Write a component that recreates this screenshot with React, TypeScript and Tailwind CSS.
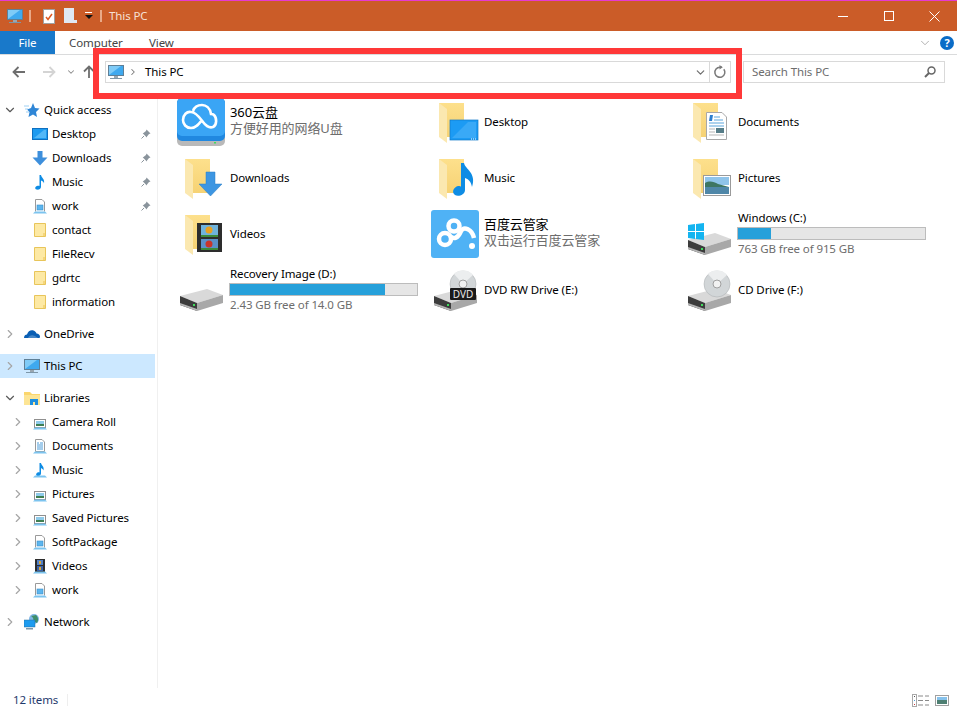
import React from 'react'
import { ChevronDown, ChevronRight } from 'lucide-react'

const Pc = () => (
  <svg width="16" height="16" viewBox="0 0 16 16" className="shrink-0">
    <rect x="0.5" y="1.5" width="15" height="10" fill="#3fa9ef" stroke="#5f7f96" />
    <path d="M1 11 L1 2 L13 2 Z" fill="#7fcbf7" />
    <rect x="6" y="12" width="4" height="2" fill="#9aa7b0" />
    <rect x="2" y="14" width="12" height="1" fill="#7d97a9" />
  </svg>
)

const Star = () => (
  <svg width="16" height="16" viewBox="0 0 16 16" className="shrink-0">
    <path d="M9 1 L11 6 L15.5 6.500 L12 10 L13 15 L9 12.500 L4.500 15 L5.500 10 L3 7.500 L7 6 Z" fill="#2f86d6" />
    <path d="M0 4 H5 M1 7 H4 M2 10 H5" stroke="#9fd0f3" />
  </svg>
)

const BlueScreen = () => (
  <svg width="16" height="16" viewBox="0 0 16 16" className="shrink-0">
    <rect x="0.500" y="2.500" width="15" height="11" fill="#1e9bf0" stroke="#0f70c0" />
    <path d="M2 12 L12 4 H14 V12 Z" fill="#54b8f7" />
  </svg>
)

const DownArrow = () => (
  <svg width="16" height="16" viewBox="0 0 16 16" className="shrink-0">
    <path d="M5.500 1 H10.500 V7.500 H15.500 L8 15.500 L0.500 7.500 H5.500 Z" fill="#3d8fdc" />
  </svg>
)

const Note = () => (
  <svg width="16" height="16" viewBox="0 0 16 16" className="shrink-0">
    <path d="M7.500 1 H9 C9.500 4 13 5 12 9.500 C11.500 7.500 10.500 7 9 6.500 V13 C9 15 6.500 16 4.500 15.500 C2.500 15 3 12.500 5 12 C6 11.700 7 11.800 7.500 12 Z" fill="#0e8ce4" />
  </svg>
)

const Lib = ({ children }: { children?: React.ReactNode }) => (
  <svg width="16" height="16" viewBox="0 0 16 16" className="shrink-0">
    {children}
    <path d="M1 15.500 L3 13.500 H13 L15 15.500 Z" fill="#7cc4ef" />
  </svg>
)

const DocLib = () => (
  <Lib>
    <path d="M3.500 13.500 V1.500 H10 L12.500 4 V13.500" fill="#fff" stroke="#9a9a9a" />
    <rect x="5" y="7" width="6" height="5" fill="#5cb5ee" stroke="#3b8fc9" strokeWidth="0.600" />
  </Lib>
)

const PicLib = () => (
  <Lib>
    <rect x="2.500" y="5.500" width="11" height="8" fill="#fff" stroke="#8f8f8f" />
    <rect x="4" y="7" width="8" height="3" fill="#8fcbea" />
    <rect x="4" y="10" width="8" height="2" fill="#3f7f52" />
  </Lib>
)

const TextLib = () => (
  <Lib>
    <path d="M3.500 13.500 V1.500 H10 L12.500 4 V13.500 Z" fill="#fff" stroke="#9a9a9a" />
    <path d="M5 5 H7 M8 5 H11 M5 7 H11 M5 9 H11 M5 11 H11" stroke="#4a9bd8" />
  </Lib>
)

const MusicLib = () => (
  <Lib>
    <path d="M7.500 1 H9 C9.500 3.500 12.500 4.500 11.500 8.500 C11 7 10 6.500 9 6 V11.500 C9 13.500 6.500 14.500 5 14 C3.500 13.500 4 11 5.500 10.500 C6.300 10.300 7 10.300 7.500 10.500 Z" fill="#0e8ce4" />
  </Lib>
)

const FilmLib = () => (
  <Lib>
    <rect x="3" y="1" width="10" height="13" fill="#2d2d2d" />
    <rect x="5" y="2" width="6" height="5" fill="#4f7fc9" />
    <rect x="5" y="8" width="6" height="5" fill="#3c62a8" />
    <path d="M7 3 H9 V6 H7 Z M7 9 H9 V12 H7 Z" fill="#d9a63a" />
  </Lib>
)

const SmallFolder = () => (
  <svg width="16" height="16" viewBox="0 0 16 16" className="shrink-0">
    <path d="M2.500 1.500 H13.500 V14.500 H2.500 Z" fill="#fde9a4" stroke="#e8c55a" />
    <path d="M11 14 V11 H13 V14 Z" fill="#f5d67b" />
  </svg>
)

const Cloud = () => (
  <svg width="16" height="16" viewBox="0 0 16 16" className="shrink-0">
    <path d="M0 12 C0 9.500 1.500 8.500 3 8.500 C4 5 7 3.500 9.500 4.500 C11 5 12 6 12.500 7.500 C14.500 7.500 16 9 16 10.500 C16 11.500 15.500 12 15 12 Z" fill="#0a5fb4" />
    <path d="M4 12 C5 9.500 8 8.500 11 10 L14 12 Z" fill="#fff" opacity="0.250" />
  </svg>
)

const LibFolder = () => (
  <svg width="16" height="16" viewBox="0 0 16 16" className="shrink-0">
    <path d="M0 2 H6 L8 4 H16 V15 H0 Z" fill="#fbd66d" />
    <path d="M0 5 H16 V15 H0 Z" fill="#fde595" />
    <rect x="6" y="9" width="8" height="6" fill="#1d8fe0" />
    <rect x="9" y="12" width="2" height="3" fill="#fde595" />
  </svg>
)

const Net = () => (
  <svg width="16" height="16" viewBox="0 0 16 16" className="shrink-0">
    <circle cx="10" cy="5" r="5" fill="#7fb6e6" />
    <path d="M7 2 C9 3 10 5 9 7 L13 9 C15 6 14 3 12 1 Z" fill="#3f8f6a" />
    <rect x="0" y="6" width="11" height="7" fill="#1d9bef" stroke="#2a6f9f" strokeWidth="0.500" />
    <rect x="2" y="14" width="7" height="1.500" fill="#7d97a9" />
  </svg>
)

const Pin = () => (
  <svg width="10" height="10" viewBox="0 0 10 10" className="shrink-0">
    <path d="M5.500 0.500 L9.500 4.500 L8 5 L6 7.500 L5.800 8.500 L1.700 4.300 L2.500 4 L5 2 Z" fill="#8a949c" />
    <path d="M3 7 L0.500 9.500" stroke="#8a949c" />
  </svg>
)

// big folder shared by the six library tiles, overlay goes on top
const BigFolder = ({ children }: { children?: React.ReactNode }) => (
  <svg width="48" height="48" viewBox="0 0 48 48" className="shrink-0">
    <defs>
      <linearGradient id="folderBack" x1="0" y1="0" x2="0" y2="1">
        <stop offset="0" stopColor="#fde08c" />
        <stop offset="1" stopColor="#f6d274" />
      </linearGradient>
    </defs>
    <path d="M8 5 H33 V39 H8 Z" fill="url(#folderBack)" />
    <path d="M8 5 L16 11 V45 L8 39 Z" fill="#fbe8b0" />
    {children}
  </svg>
)

const Big = ({ children }: { children: React.ReactNode }) => (
  <svg width="48" height="48" viewBox="0 0 48 48" className="shrink-0">{children}</svg>
)

const DriveBody = () => (
  <>
    <path d="M3 30 L30 23 L46 29 L20 37 Z" fill="#d9d9d9" />
    <path d="M3 30 L20 37 V45 L3 39 Z" fill="#3c3c3c" />
    <path d="M3 37 L20 43 V45 L3 39 Z" fill="#b5b5b5" />
    <path d="M20 37 L46 29 V37 L20 45 Z" fill="#a8a8a8" />
    <rect x="16" y="38" width="2" height="2" fill="#3fdc5c" />
  </>
)

const Disc = () => (
  <>
    <circle cx="32" cy="18" r="13" fill="#d2d6d8" stroke="#a8acae" strokeWidth="0.500" />
    <path d="M32 18 L23 8 A13 13 0 0 1 42 9 Z" fill="#eceeef" />
    <circle cx="32" cy="18" r="4" fill="#f2f2f2" stroke="#a0a0a0" />
  </>
)

const Item = ({ icon, children }: { icon: React.ReactNode; children: React.ReactNode }) => (
  <div className="flex h-14 items-center pl-px">
    {icon}
    <div className="ml-[5px] min-w-0 flex-1 text-black">{children}</div>
  </div>
)

const Tile = ({ icon, name, sub }: { icon: React.ReactNode; name: string; sub: string }) => (
  <Item icon={icon}>
    <div className="-mt-[4px] text-[13px] leading-[16px]">{name}</div>
    <div className="text-[13px] leading-[16px] text-[#6d6d6d]">{sub}</div>
  </Item>
)

const Drive = ({ icon, name, free, used }: { icon: React.ReactNode; name: string; free: string; used: string }) => (
  <Item icon={icon}>
    <div className="-mt-px leading-[16px]">{name}</div>
    <div className="-ml-px mt-px h-[13px] w-[189px] border border-[#bcbcbc] bg-[#e6e6e6]">
      <div className={used + ' h-full bg-[#26a0da]'} />
    </div>
    <div className="mt-px leading-[16px] text-[#6d6d6d]">{free}</div>
  </Item>
)

const Row = ({ level = 1, arrow, icon, label, pin, active }: {
  level?: 1 | 2
  arrow?: 'open' | 'closed'
  icon: React.ReactNode
  label: string
  pin?: boolean
  active?: boolean
}) => (
  <div className={'flex h-6 items-center ' + (active ? 'bg-[#cce8ff] ' : '') + (level === 1 ? 'pl-[3px]' : 'pl-[11px]')}>
    <span className="flex w-[14px] justify-center">
      {arrow === 'open' && <ChevronDown size={14} strokeWidth={2} className="text-[#5a5a5a]" />}
      {arrow === 'closed' && <ChevronRight size={14} strokeWidth={2} className="text-[#a6a6a6]" />}
    </span>
    <span className="ml-[7px]">{icon}</span>
    <span className="ml-1 flex-1 text-black">{label}</span>
    {pin && <span className="mr-[4px]"><Pin /></span>}
  </div>
)

export default function App() {
  return (
    <div className="relative flex h-[710px] w-[957px] flex-col overflow-hidden bg-white text-[11.5px] leading-4 tracking-[-0.1px]" style={{ fontFamily: '"Noto Sans", "Noto Sans CJK SC", sans-serif' }}>
      {/* title bar */}
      <div className="flex h-[31px] items-center border-t border-[#e63ad0] bg-[#cb5c28]">
        <div className="ml-[7px]"><Pc /></div>
        <div className="ml-[6px] h-3 w-[2px] border-x border-[#e9a988]" />
        <svg width="14" height="16" viewBox="0 0 14 16" className="ml-[11px]">
          <rect x="1.500" y="1.500" width="11" height="14" fill="#fff" stroke="#a0a0a0" />
          <path d="M4 9 L6 11.500 L10 6" fill="none" stroke="#dd5a22" strokeWidth="1.500" />
        </svg>
        <svg width="14" height="16" viewBox="0 0 14 16" className="ml-[8px]">
          <path d="M0 0 H10 V12 L13 12 V15 H0 Z" fill="#dfe8f3" />
        </svg>
        <svg width="10" height="10" viewBox="0 0 10 10" className="ml-[6px]">
          <rect x="1" y="1" width="7" height="1" fill="#fff" />
          <path d="M1 4 H9 L5 8 Z" fill="#111" />
        </svg>
        <div className="ml-[6px] h-3 w-[2px] border-x border-[#e9a988]" />
        <span className="ml-[7px] text-[#f6e0d5]">This PC</span>
        <div className="ml-auto flex h-full">
          <div className="flex w-[46px] items-center justify-center"><div className="h-px w-[10px] bg-white" /></div>
          <div className="flex w-[45px] items-center justify-center"><div className="h-[10px] w-[10px] border border-white" /></div>
          <div className="flex w-[46px] items-center justify-center">
            <svg width="11" height="11" viewBox="0 0 11 11"><path d="M0.500 0.500 L10.500 10.500 M10.500 0.500 L0.500 10.500" stroke="#fff" /></svg>
          </div>
        </div>
      </div>

      {/* ribbon tabs */}
      <div className="flex h-6 items-stretch border-b border-[#dadbdc]">
        <div className="flex w-[55px] items-center justify-center bg-[#1979ca] text-white">File</div>
        <div className="ml-[14px] flex w-[52px] items-center text-[#444]">Computer</div>
        <div className="ml-7 flex items-center text-[#444]">View</div>
        <div className="ml-auto flex items-center">
          <ChevronDown size={14} strokeWidth={1.300} className="mr-[8px] text-[#9a9a9a]" />
          <div className="mr-[3px] flex h-[14px] w-[14px] items-center justify-center rounded-full bg-[#0a6cc7] text-[11px] font-bold text-white">?</div>
        </div>
      </div>

      {/* nav row */}
      <div className="flex h-[39px] pt-[6px]">
        <div className="flex h-[22px] w-[105px] items-center">
          <svg width="14" height="12" viewBox="0 0 14 12" className="ml-3"><path d="M13 6 H2 M6.500 1 L1.500 6 L6.500 11" fill="none" stroke="#6e6e6e" strokeWidth="1.800" /></svg>
          <svg width="14" height="12" viewBox="0 0 14 12" className="ml-4"><path d="M1 6 H12 M7.500 1 L12.500 6 L7.500 11" fill="none" stroke="#d4d4d4" strokeWidth="1.800" /></svg>
          <ChevronDown size={10} strokeWidth={2.500} className="ml-[10px] text-[#8c8c8c]" />
          <svg width="12" height="14" viewBox="0 0 12 14" className="ml-[7px]"><path d="M6 13 V2 M1 6.500 L6 1.500 L11 6.500" fill="none" stroke="#6e6e6e" strokeWidth="1.800" /></svg>
        </div>
        <div className="flex h-[22px] w-[626px] items-center border border-[#d9d9d9] pl-[2px]">
          <Pc />
          <ChevronRight size={10} strokeWidth={2.500} className="ml-[4px] text-[#7a7a7a]" />
          <span className="ml-[7px] text-black">This PC</span>
          <ChevronDown size={13} strokeWidth={2.200} className="ml-auto mr-[2px] text-[#6d6d6d]" />
          <div className="h-full w-px bg-[#d9d9d9]" />
          <svg width="20" height="14" viewBox="0 0 14 14" className="mr-0">
            <path d="M10.800 4.200 A5 5 0 1 1 7 2.300 H9" fill="none" stroke="#7a7a7a" strokeWidth="1.500" />
            <path d="M6.500 0 L9.800 2.300 L6.500 4.600 Z" fill="#7a7a7a" />
          </svg>
        </div>
        <div className="ml-3 flex h-[22px] w-[202px] items-center justify-between border border-[#d9d9d9] pl-2 pr-2 text-[#6d6d6d]">
          <span>Search This PC</span>
          <svg width="12" height="12" viewBox="0 0 12 12"><circle cx="7.500" cy="4.500" r="3.500" fill="none" stroke="#666" strokeWidth="1.500" /><path d="M5 7 L1 11" stroke="#666" strokeWidth="2" /></svg>
        </div>
      </div>

      <div className="flex min-h-0 flex-1">
        {/* nav pane */}
        <div className="w-[155px] shrink-0 pt-1">
          <Row arrow="open" icon={<Star />} label="Quick access" />
          <Row level={2} icon={<BlueScreen />} label="Desktop" pin />
          <Row level={2} icon={<DownArrow />} label="Downloads" pin />
          <Row level={2} icon={<Note />} label="Music" pin />
          <Row level={2} icon={<DocLib />} label="work" pin />
          <Row level={2} icon={<SmallFolder />} label="contact" />
          <Row level={2} icon={<SmallFolder />} label="FileRecv" />
          <Row level={2} icon={<SmallFolder />} label="gdrtc" />
          <Row level={2} icon={<SmallFolder />} label="information" />
          <div className="mt-2"><Row arrow="closed" icon={<Cloud />} label="OneDrive" /></div>
          <div className="mt-2"><Row arrow="closed" icon={<Pc />} label="This PC" active /></div>
          <div className="mt-2"><Row arrow="open" icon={<LibFolder />} label="Libraries" /></div>
          <Row level={2} arrow="closed" icon={<PicLib />} label="Camera Roll" />
          <Row level={2} arrow="closed" icon={<TextLib />} label="Documents" />
          <Row level={2} arrow="closed" icon={<MusicLib />} label="Music" />
          <Row level={2} arrow="closed" icon={<PicLib />} label="Pictures" />
          <Row level={2} arrow="closed" icon={<PicLib />} label="Saved Pictures" />
          <Row level={2} arrow="closed" icon={<DocLib />} label="SoftPackage" />
          <Row level={2} arrow="closed" icon={<FilmLib />} label="Videos" />
          <Row level={2} arrow="closed" icon={<DocLib />} label="work" />
          <div className="mt-2"><Row arrow="closed" icon={<Net />} label="Network" /></div>
        </div>
        <div className="ml-[2px] h-[594px] w-px bg-[#f0f0f0]" />

        {/* content */}
        <div className="grid flex-1 auto-rows-[56px] grid-cols-[254px_254px_254px] content-start pl-[18px]">
          <Tile
            name="360云盘"
            sub="方便好用的网络U盘"
            icon={
              <Big>
                <rect x="0" y="0" width="48" height="48" rx="5" fill="#b9b9b9" />
                <rect x="0" y="0" width="48" height="43" rx="5" fill="#2088e0" />
                <rect x="0" y="0" width="48" height="38" rx="5" fill="#3aa5f5" />
                <path d="M14 30 C9 30 6 26 6 22 C6 17 10 13 14 14 C19 14 23 20 26 24 C29 28 33 30 36 29 C40 27 40 20 37 17 C36 16 35 16 34 16 C33 10 29 7 25 7 C20 7 17 10 16 13 M14 30 C19 30 22 26 25 22" fill="none" stroke="#fff" strokeWidth="2.600" />
                <rect x="37" y="44" width="2" height="1.500" fill="#3fdc5c" />
              </Big>
            }
          />
          <Item
            icon={
              <BigFolder>
                <rect x="19" y="22" width="28" height="20" fill="#1c9bf4" stroke="#0f78c8" strokeWidth="0.700" />
                <path d="M21 40 L37 24 H45 V40 Z" fill="#4db3f8" opacity="0.600" />
                <path d="M40 41 H46" stroke="#fff" strokeDasharray="1 1" />
              </BigFolder>
            }
          >
            <div className="-mt-px leading-4">Desktop</div>
          </Item>
          <Item
            icon={
              <BigFolder>
                <path d="M21.500 14.500 H37 L41.500 19 V41.500 H21.500 Z" fill="#fff" stroke="#a8a8a8" />
                <path d="M25 17 H28 L27 23 H24 Z" fill="#2d7fd0" />
                <path d="M29 19 H35 M29 22 H38 M24 25 H39 M24 28 H39" stroke="#5aa5dc" />
                <rect x="31" y="30" width="8" height="5" fill="#567d88" />
                <path d="M24 31 H30 M24 34 H30 M24 37 H39" stroke="#b5b5b5" />
              </BigFolder>
            }
          >
            <div className="-mt-px leading-4">Documents</div>
          </Item>

          <Item
            icon={
              <BigFolder>
                <path d="M29 18 H38 V30 H45 L33.500 42 L22 30 H29 Z" fill="#3d96e2" stroke="#2a7cc4" strokeWidth="0.500" />
              </BigFolder>
            }
          >
            <div className="-mt-px leading-4">Downloads</div>
          </Item>
          <Item
            icon={
              <BigFolder>
                <path d="M30 9 H33 C34 15 46 19 41 33 C40 27 37 25 34 24 V36 C34 41 27 43 24 41 C20 38 23 33 27 32 C29 32 30 32 30 33 Z" fill="#0e8ce4" />
              </BigFolder>
            }
          >
            <div className="-mt-px leading-4">Music</div>
          </Item>
          <Item
            icon={
              <BigFolder>
                <rect x="18.500" y="21.500" width="27" height="20" fill="#fff" stroke="#9a9a9a" />
                <rect x="20" y="23" width="24" height="8" fill="#8fc4ea" />
                <path d="M20 33 V29 C25 26 29 28 33 30 L44 33 Z" fill="#3e7662" />
                <rect x="20" y="33" width="24" height="7" fill="#4f87a8" />
              </BigFolder>
            }
          >
            <div className="-mt-px leading-4">Pictures</div>
          </Item>

          <Item
            icon={
              <BigFolder>
                <rect x="20" y="13" width="25" height="29" fill="#2d2d2d" />
                <rect x="24" y="15" width="17" height="12" fill="#6fb3dc" />
                <rect x="24" y="29" width="17" height="11" fill="#5a8fc9" />
                <circle cx="32" cy="20" r="3.500" fill="#e8a020" />
                <circle cx="32" cy="34" r="3.500" fill="#c9342a" />
                <path d="M24 27 H41 V25 H24 Z M24 40 H41 V38 H24 Z" fill="#3c8a3c" />
              </BigFolder>
            }
          >
            <div className="-mt-px leading-4">Videos</div>
          </Item>
          <Tile
            name="百度云管家"
            sub="双击运行百度云管家"
            icon={
              <Big>
                <rect x="0" y="0" width="48" height="48" rx="3" fill="#4fb2f5" />
                <circle cx="23" cy="16" r="5.500" fill="none" stroke="#fff" strokeWidth="4.500" />
                <circle cx="14" cy="29" r="6" fill="none" stroke="#fff" strokeWidth="4.500" />
                <path d="M19 26 C23 30 27 28 30 21 C33 16 41 19 43 28" fill="none" stroke="#fff" strokeWidth="4.500" />
                <circle cx="41" cy="36" r="3" fill="#fff" />
              </Big>
            }
          />
          <Drive
            name="Windows (C:)"
            free="763 GB free of 915 GB"
            used="w-[33px]"
            icon={
              <Big>
                <DriveBody />
                <path d="M3 15 L10 14 V21 H3 Z M11 14 L19 13 V21 H11 Z M3 22 H10 V29 L3 28 Z M11 22 H19 V30 L11 29 Z" fill="#14b4f0" />
              </Big>
            }
          />

          <Drive
            name="Recovery Image (D:)"
            free="2.43 GB free of 14.0 GB"
            used="w-[155px]"
            icon={<Big><DriveBody /></Big>}
          />
          <Item
            icon={
              <Big>
                <DriveBody />
                <Disc />
                <rect x="19" y="22" width="26" height="12" rx="1" fill="#1a1a1a" />
                <text x="32" y="32" textAnchor="middle" fontSize="10" letterSpacing="0" fill="#e8e8e8">DVD</text>
              </Big>
            }
          >
            <div className="-mt-px leading-4">DVD RW Drive (E:)</div>
          </Item>
          <Item icon={<Big><DriveBody /><Disc /></Big>}>
            <div className="-mt-px leading-4">CD Drive (F:)</div>
          </Item>
        </div>
      </div>

      {/* status bar */}
      <div className="flex h-[22px] items-center pt-[2px]">
        <span className="ml-[13px] text-[#1f3a6d]">12 items</span>
        <div className="ml-[9px] h-3 w-px bg-[#eeeeee]" />
        <svg width="18" height="13" viewBox="0 0 18 13" className="ml-auto">
          <rect x="0.500" y="0.500" width="4" height="12" fill="#fff" stroke="#a8a8a8" />
          <rect x="2" y="2" width="1" height="1" fill="#555" />
          <rect x="2" y="6" width="1" height="1" fill="#4f9fdc" />
          <rect x="2" y="10" width="1" height="1" fill="#d04040" />
          <path d="M6 2 H11 M13 2 H17 M6 6.500 H11 M13 6.500 H17 M6 11 H11 M13 11 H17" stroke="#8a8a8a" />
        </svg>
        <svg width="14" height="11" viewBox="0 0 14 11" className="ml-[5px] mr-2">
          <rect x="0.500" y="0.500" width="13" height="10" fill="#fff" stroke="#a0a0a0" />
          <rect x="2" y="2" width="10" height="3" fill="#86c2ec" />
          <rect x="2" y="5" width="10" height="4" fill="#4e7f72" />
        </svg>
      </div>

      {/* red annotation box over the address bar */}
      <div className="absolute left-[93px] top-[48px] h-[51px] w-[649px] border-[6px] border-[#ff3838]" />
    </div>
  )
}
